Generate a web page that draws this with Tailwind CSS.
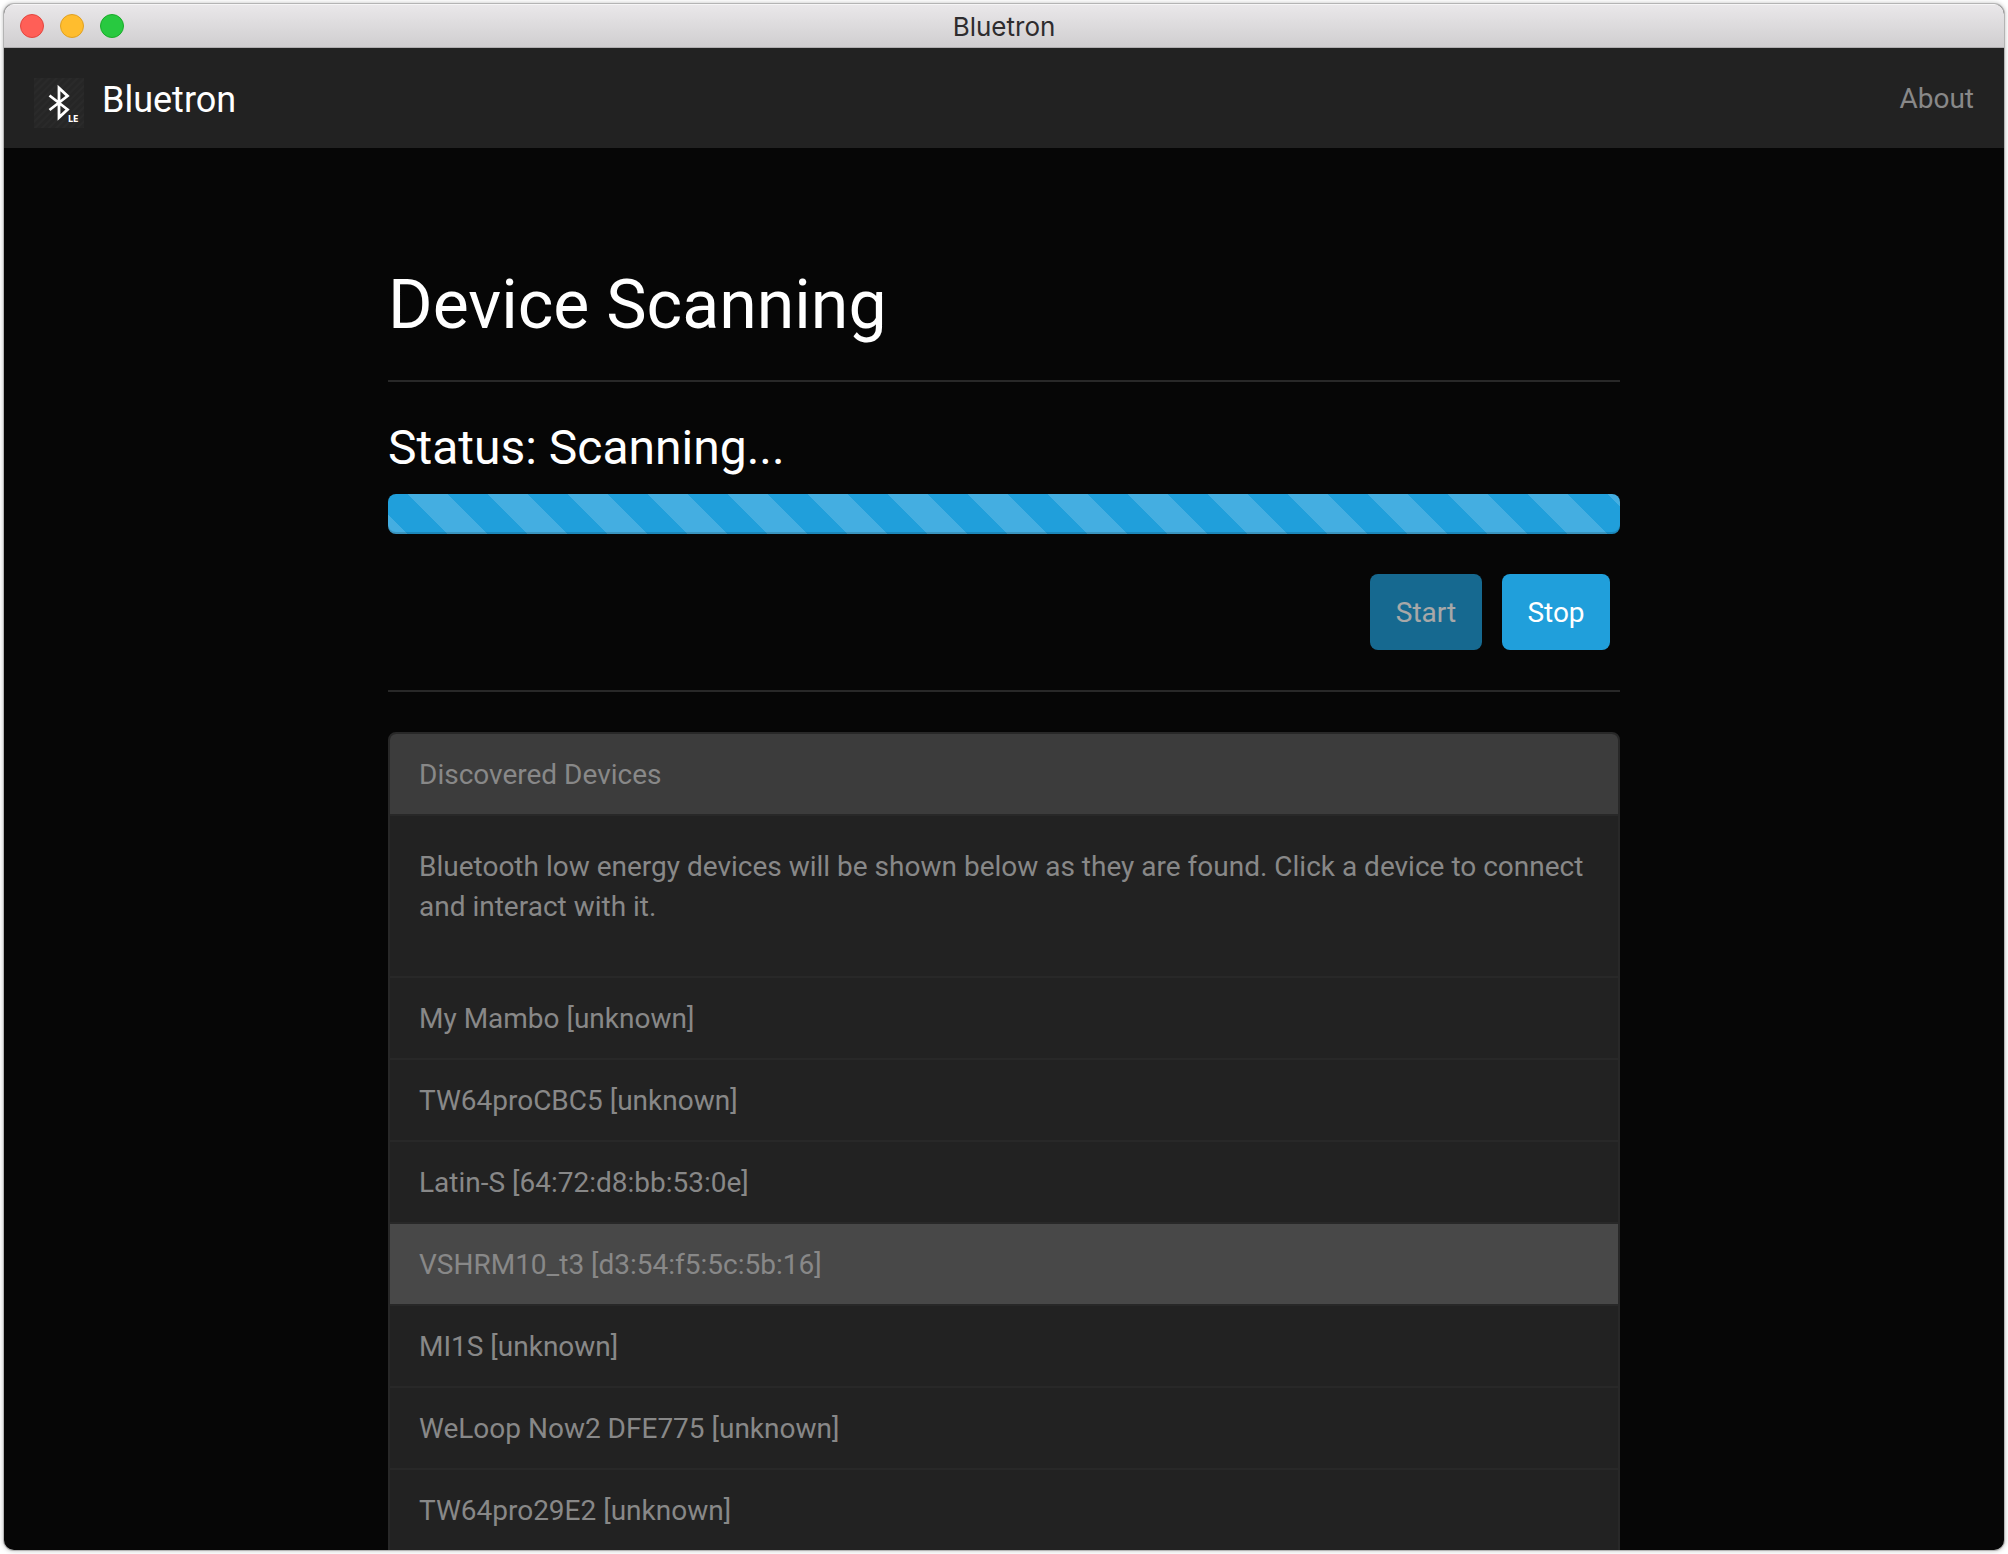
<!DOCTYPE html>
<html lang="en">
<head>
<meta charset="utf-8">
<meta name="viewport" content="width=device-width, initial-scale=1">
<title>Bluetron</title>
<script src="https://cdn.jsdelivr.net/npm/@tailwindcss/browser@4"></script>
</head>
<body class="bg-white font-['Roboto',sans-serif] text-[28px] leading-10 text-[#888888]">
<div class="h-screen p-1">
  <div class="flex h-full flex-col overflow-hidden rounded-[10px] bg-[#060606] shadow-[0_0_0_1px_#b4b4b4,0_0_4px_1px_rgba(0,0,0,0.25)]">

    <!-- Window title bar -->
    <div class="grid h-11 shrink-0 grid-cols-[1fr_auto_1fr] items-center border-b border-[#b0aeb0] bg-linear-to-b from-[#eae8ea] to-[#d0ced0] px-4 shadow-[inset_0_1px_0_#f6f5f6]">
      <div class="flex gap-4">
        <button type="button" aria-label="Close" class="size-6 rounded-full border border-[#e2463f] bg-[#ff5f57]"></button>
        <button type="button" aria-label="Minimize" class="size-6 rounded-full border border-[#dfa023] bg-[#ffbd2e]"></button>
        <button type="button" aria-label="Zoom" class="size-6 rounded-full border border-[#1aab29] bg-[#28c940]"></button>
      </div>
      <div class="pt-0.5 font-['Inter',sans-serif] text-[26px] leading-8 text-[#2e2c2e]">Bluetron</div>
    </div>

    <!-- Navigation -->
    <nav class="flex h-25 shrink-0 items-start justify-between bg-[#222222] px-[30px] pt-[30px]">
      <a href="#" class="flex items-start gap-[18px] text-4xl leading-11 text-white">
        <svg class="size-[50px]" viewBox="0 0 50 50" aria-hidden="true">
          <defs>
            <pattern id="brushed" width="5" height="5" patternUnits="userSpaceOnUse" patternTransform="rotate(45)">
              <rect width="5" height="5" fill="#262626"/>
              <rect width="2" height="5" fill="#2a2a2a"/>
            </pattern>
          </defs>
          <rect width="50" height="50" fill="url(#brushed)"/>
          <path d="M15.500 17.500L33.500 31.500L25 39.500V10L33.500 18L15.500 32" fill="none" stroke="#fff" stroke-width="2.800"/>
          <text x="34" y="43.500" font-family="DejaVu Sans, sans-serif" font-size="8" font-weight="700" fill="#fff">LE</text>
        </svg>
        Bluetron
      </a>
      <a href="#" class="leading-[42px]">About</a>
    </nav>

    <!-- Page content -->
    <div class="min-h-0 flex-1 overflow-hidden px-8">
      <main class="mx-auto max-w-[1232px] pt-30">
        <h1 class="text-[68px] leading-[74px] text-white">Device Scanning</h1>
        <hr class="mt-[38px] mb-10 border-t-2 border-[#282828]">

        <h2 class="text-5xl leading-[52px] text-white">Status: Scanning...</h2>
        <div role="progressbar" aria-label="Scanning" class="mt-5 h-10 rounded-lg bg-[#209fdb] bg-[linear-gradient(45deg,rgba(255,255,255,0.16)_25%,transparent_25%,transparent_50%,rgba(255,255,255,0.16)_50%,rgba(255,255,255,0.16)_75%,transparent_75%)] bg-size-[80px_80px] bg-position-[20px_0] shadow-[inset_0_-2px_0_rgba(0,0,0,0.15)]"></div>

        <div class="mt-10 flex justify-end gap-5 pr-[10px]">
          <button type="button" disabled class="h-[76px] w-28 rounded-lg bg-[#209fdb] pt-0.5 text-white opacity-65">Start</button>
          <button type="button" class="h-[76px] w-27 rounded-lg bg-[#209fdb] pt-0.5 text-white">Stop</button>
        </div>
        <hr class="my-10 border-t-2 border-[#282828]">

        <section class="overflow-hidden rounded-lg border-2 border-[#282828] bg-[#222222]">
          <h3 class="border-b-2 border-[#282828] bg-[#3c3c3c] px-[29px] pt-[21px] pb-[19px]">Discovered Devices</h3>
          <p class="px-[29px] pt-[31px] pb-[49px]">Bluetooth low energy devices will be shown below as they are found. Click a device to connect and interact with it.</p>
          <ul>
            <li class="border-t-2 border-[#282828]"><a href="#" class="block px-[29px] pt-[21px] pb-[19px]">My Mambo [unknown]</a></li>
            <li class="border-t-2 border-[#282828]"><a href="#" class="block px-[29px] pt-[21px] pb-[19px]">TW64proCBC5 [unknown]</a></li>
            <li class="border-t-2 border-[#282828]"><a href="#" class="block px-[29px] pt-[21px] pb-[19px]">Latin-S [64:72:d8:bb:53:0e]</a></li>
            <li class="border-t-2 border-[#282828]"><a href="#" class="block bg-[#484848] px-[29px] pt-[21px] pb-[19px]">VSHRM10_t3 [d3:54:f5:5c:5b:16]</a></li>
            <li class="border-t-2 border-[#282828]"><a href="#" class="block px-[29px] pt-[21px] pb-[19px]">MI1S [unknown]</a></li>
            <li class="border-t-2 border-[#282828]"><a href="#" class="block px-[29px] pt-[21px] pb-[19px]">WeLoop Now2 DFE775 [unknown]</a></li>
            <li class="border-t-2 border-[#282828]"><a href="#" class="block px-[29px] pt-[21px] pb-[19px]">TW64pro29E2 [unknown]</a></li>
          </ul>
          <div class="h-10"></div>
        </section>
      </main>
    </div>
  </div>
</div>
</body>
</html>
